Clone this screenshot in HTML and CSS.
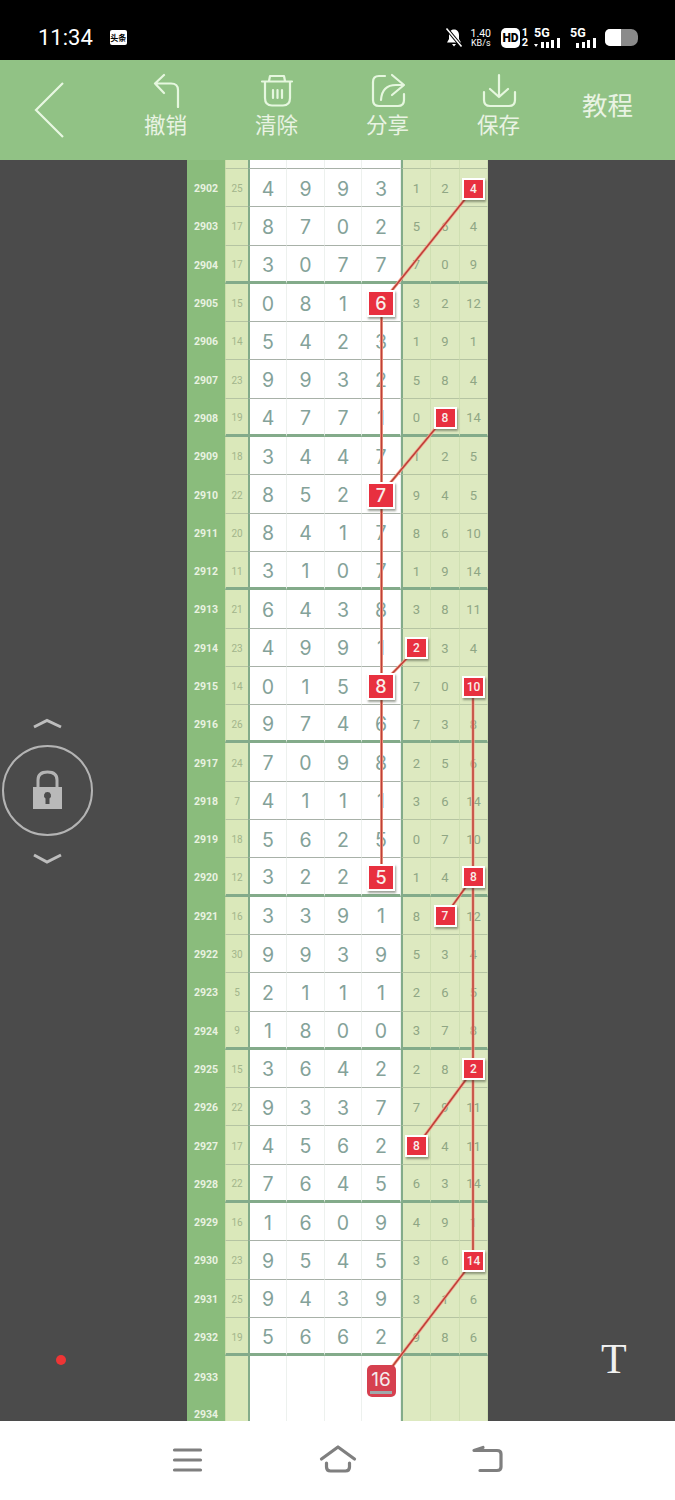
FILE: index.html
```html
<!DOCTYPE html>
<html lang="zh">
<head>
<meta charset="utf-8">
<title>走势图</title>
<link rel="stylesheet" href="styles.css">
</head>
<body>
<div class="page">
  <header class="status">
    <span class="time">11:34</span>
    <span class="app-badge">头条</span>
    <div class="status-right">
      <svg class="bell" viewBox="0 0 18 19"><path d="M9 1.5c3.4 0 5 2.6 5 5.5v4l2 3.5H2l2-3.5V7c0-2.900 1.600-5.500 5-5.500zM7 16h4l-2 2.500z" fill="#fff"/><path d="M1.500 0.500L16.500 18.500" stroke="#000" stroke-width="3.500"/><path d="M1.500 0.500L16.500 18.500" stroke="#fff" stroke-width="1.500"/></svg>
      <div class="speed"><span>1.40</span><span class="unit">KB/s</span></div>
      <span class="hd">HD</span>
      <div class="hd-nums"><span>1</span><span>2</span></div>
      <div class="sim">
        <span class="five">5G</span>
        <svg class="bars" viewBox="0 0 27 10"><path d="M0 6h4l-2 3zM7 4h3v6H7zM12 4h3v6h-3zM17 2h3v8h-3zM23 0h3v10h-3z" fill="#fff"/></svg>
      </div>
      <div class="sim sim-two">
        <span class="five">5G</span>
        <svg class="bars" viewBox="0 0 22 10"><path d="M1 5h3v5H1zM7 4h3v6H7zM12 2h3v8h-3zM18 0h3v10h-3z" fill="#fff"/></svg>
      </div>
      <div class="battery"><span class="battery-fill"></span></div>
    </div>
  </header>

  <nav class="toolbar">
    <div class="back-cell">
      <svg class="chevron" viewBox="33 80 32 60"><path d="M63 83L36 110L63 137"/></svg>
    </div>
    <div class="tool">
      <svg class="tool-icon" viewBox="145 72 40 36"><path d="M163 75L154 83.500L163 93M154 83.500H170Q177 83.500 177 90V107"/></svg>
      <span class="tool-label">撤销</span>
    </div>
    <div class="tool">
      <svg class="tool-icon" viewBox="256 72 40 36"><path d="M261 81.500H291M268 81L269 76H283L284 81M264 82V98Q264 105.500 271 105.500H282Q289 105.500 289 98V82M272 90V98M276.500 90V98M281 90V98"/></svg>
      <span class="tool-label">清除</span>
    </div>
    <div class="tool">
      <svg class="tool-icon" viewBox="367 72 40 36"><path d="M384 76H378Q372 76 372 82V100Q372 106 378 106H397Q403 106 403 100V94M391 75L403 85L391 95M403 85H395Q381 85 380 100"/></svg>
      <span class="tool-label">分享</span>
    </div>
    <div class="tool">
      <svg class="tool-icon" viewBox="478 72 40 36"><path d="M498 75V97M489 89L498 97L507 89M483 92V100Q483 106 489 106H508Q514 106 514 100V92"/></svg>
      <span class="tool-label">保存</span>
    </div>
    <div class="tutorial">教程</div>
  </nav>

  <main class="canvas">
    <div class="board">
      <div class="row lead"><span class="c i"></span><span class="c s"></span><span class="c d d1"></span><span class="c d"></span><span class="c d"></span><span class="c d"></span><span class="c r r1"></span><span class="c r"></span><span class="c r"></span></div>

      <div class="row"><span class="c i">2902</span><span class="c s">25</span><span class="c d d1">4</span><span class="c d">9</span><span class="c d">9</span><span class="c d">3</span><span class="c r r1">1</span><span class="c r">2</span><span class="c r"><b class="mark">4</b></span></div>
      <div class="row"><span class="c i">2903</span><span class="c s">17</span><span class="c d d1">8</span><span class="c d">7</span><span class="c d">0</span><span class="c d">2</span><span class="c r r1">5</span><span class="c r">6</span><span class="c r">4</span></div>
      <div class="row g"><span class="c i">2904</span><span class="c s">17</span><span class="c d d1">3</span><span class="c d">0</span><span class="c d">7</span><span class="c d">7</span><span class="c r r1">7</span><span class="c r">0</span><span class="c r">9</span></div>

      <div class="row"><span class="c i">2905</span><span class="c s">15</span><span class="c d d1">0</span><span class="c d">8</span><span class="c d">1</span><span class="c d"><b class="mark big">6</b></span><span class="c r r1">3</span><span class="c r">2</span><span class="c r">12</span></div>
      <div class="row"><span class="c i">2906</span><span class="c s">14</span><span class="c d d1">5</span><span class="c d">4</span><span class="c d">2</span><span class="c d">3</span><span class="c r r1">1</span><span class="c r">9</span><span class="c r">1</span></div>
      <div class="row"><span class="c i">2907</span><span class="c s">23</span><span class="c d d1">9</span><span class="c d">9</span><span class="c d">3</span><span class="c d">2</span><span class="c r r1">5</span><span class="c r">8</span><span class="c r">4</span></div>
      <div class="row g"><span class="c i">2908</span><span class="c s">19</span><span class="c d d1">4</span><span class="c d">7</span><span class="c d">7</span><span class="c d">1</span><span class="c r r1">0</span><span class="c r"><b class="mark">8</b></span><span class="c r">14</span></div>

      <div class="row"><span class="c i">2909</span><span class="c s">18</span><span class="c d d1">3</span><span class="c d">4</span><span class="c d">4</span><span class="c d">7</span><span class="c r r1">1</span><span class="c r">2</span><span class="c r">5</span></div>
      <div class="row"><span class="c i">2910</span><span class="c s">22</span><span class="c d d1">8</span><span class="c d">5</span><span class="c d">2</span><span class="c d"><b class="mark big">7</b></span><span class="c r r1">9</span><span class="c r">4</span><span class="c r">5</span></div>
      <div class="row"><span class="c i">2911</span><span class="c s">20</span><span class="c d d1">8</span><span class="c d">4</span><span class="c d">1</span><span class="c d">7</span><span class="c r r1">8</span><span class="c r">6</span><span class="c r">10</span></div>
      <div class="row g"><span class="c i">2912</span><span class="c s">11</span><span class="c d d1">3</span><span class="c d">1</span><span class="c d">0</span><span class="c d">7</span><span class="c r r1">1</span><span class="c r">9</span><span class="c r">14</span></div>

      <div class="row"><span class="c i">2913</span><span class="c s">21</span><span class="c d d1">6</span><span class="c d">4</span><span class="c d">3</span><span class="c d">8</span><span class="c r r1">3</span><span class="c r">8</span><span class="c r">11</span></div>
      <div class="row"><span class="c i">2914</span><span class="c s">23</span><span class="c d d1">4</span><span class="c d">9</span><span class="c d">9</span><span class="c d">1</span><span class="c r r1"><b class="mark">2</b></span><span class="c r">3</span><span class="c r">4</span></div>
      <div class="row"><span class="c i">2915</span><span class="c s">14</span><span class="c d d1">0</span><span class="c d">1</span><span class="c d">5</span><span class="c d"><b class="mark big">8</b></span><span class="c r r1">7</span><span class="c r">0</span><span class="c r"><b class="mark">10</b></span></div>
      <div class="row g"><span class="c i">2916</span><span class="c s">26</span><span class="c d d1">9</span><span class="c d">7</span><span class="c d">4</span><span class="c d">6</span><span class="c r r1">7</span><span class="c r">3</span><span class="c r">8</span></div>

      <div class="row"><span class="c i">2917</span><span class="c s">24</span><span class="c d d1">7</span><span class="c d">0</span><span class="c d">9</span><span class="c d">8</span><span class="c r r1">2</span><span class="c r">5</span><span class="c r">6</span></div>
      <div class="row"><span class="c i">2918</span><span class="c s">7</span><span class="c d d1">4</span><span class="c d">1</span><span class="c d">1</span><span class="c d">1</span><span class="c r r1">3</span><span class="c r">6</span><span class="c r">14</span></div>
      <div class="row"><span class="c i">2919</span><span class="c s">18</span><span class="c d d1">5</span><span class="c d">6</span><span class="c d">2</span><span class="c d">5</span><span class="c r r1">0</span><span class="c r">7</span><span class="c r">10</span></div>
      <div class="row g"><span class="c i">2920</span><span class="c s">12</span><span class="c d d1">3</span><span class="c d">2</span><span class="c d">2</span><span class="c d"><b class="mark big">5</b></span><span class="c r r1">1</span><span class="c r">4</span><span class="c r"><b class="mark">8</b></span></div>

      <div class="row"><span class="c i">2921</span><span class="c s">16</span><span class="c d d1">3</span><span class="c d">3</span><span class="c d">9</span><span class="c d">1</span><span class="c r r1">8</span><span class="c r"><b class="mark">7</b></span><span class="c r">12</span></div>
      <div class="row"><span class="c i">2922</span><span class="c s">30</span><span class="c d d1">9</span><span class="c d">9</span><span class="c d">3</span><span class="c d">9</span><span class="c r r1">5</span><span class="c r">3</span><span class="c r">4</span></div>
      <div class="row"><span class="c i">2923</span><span class="c s">5</span><span class="c d d1">2</span><span class="c d">1</span><span class="c d">1</span><span class="c d">1</span><span class="c r r1">2</span><span class="c r">6</span><span class="c r">5</span></div>
      <div class="row g"><span class="c i">2924</span><span class="c s">9</span><span class="c d d1">1</span><span class="c d">8</span><span class="c d">0</span><span class="c d">0</span><span class="c r r1">3</span><span class="c r">7</span><span class="c r">8</span></div>

      <div class="row"><span class="c i">2925</span><span class="c s">15</span><span class="c d d1">3</span><span class="c d">6</span><span class="c d">4</span><span class="c d">2</span><span class="c r r1">2</span><span class="c r">8</span><span class="c r"><b class="mark">2</b></span></div>
      <div class="row"><span class="c i">2926</span><span class="c s">22</span><span class="c d d1">9</span><span class="c d">3</span><span class="c d">3</span><span class="c d">7</span><span class="c r r1">7</span><span class="c r">9</span><span class="c r">11</span></div>
      <div class="row"><span class="c i">2927</span><span class="c s">17</span><span class="c d d1">4</span><span class="c d">5</span><span class="c d">6</span><span class="c d">2</span><span class="c r r1"><b class="mark">8</b></span><span class="c r">4</span><span class="c r">11</span></div>
      <div class="row g"><span class="c i">2928</span><span class="c s">22</span><span class="c d d1">7</span><span class="c d">6</span><span class="c d">4</span><span class="c d">5</span><span class="c r r1">6</span><span class="c r">3</span><span class="c r">14</span></div>

      <div class="row"><span class="c i">2929</span><span class="c s">16</span><span class="c d d1">1</span><span class="c d">6</span><span class="c d">0</span><span class="c d">9</span><span class="c r r1">4</span><span class="c r">9</span><span class="c r">1</span></div>
      <div class="row"><span class="c i">2930</span><span class="c s">23</span><span class="c d d1">9</span><span class="c d">5</span><span class="c d">4</span><span class="c d">5</span><span class="c r r1">3</span><span class="c r">6</span><span class="c r"><b class="mark">14</b></span></div>
      <div class="row"><span class="c i">2931</span><span class="c s">25</span><span class="c d d1">9</span><span class="c d">4</span><span class="c d">3</span><span class="c d">9</span><span class="c r r1">3</span><span class="c r">1</span><span class="c r">6</span></div>
      <div class="row g"><span class="c i">2932</span><span class="c s">19</span><span class="c d d1">5</span><span class="c d">6</span><span class="c d">6</span><span class="c d">2</span><span class="c r r1">9</span><span class="c r">8</span><span class="c r">6</span></div>

      <div class="row"><span class="c i">2933</span><span class="c s"></span><span class="c d d1"></span><span class="c d"></span><span class="c d"></span><span class="c d"><b class="current"><span class="current-num">16</span></b></span><span class="c r r1"></span><span class="c r"></span><span class="c r"></span></div>
      <div class="row"><span class="c i">2934</span><span class="c s"></span><span class="c d d1"></span><span class="c d"></span><span class="c d"></span><span class="c d"></span><span class="c r r1"></span><span class="c r"></span><span class="c r"></span></div>

      <svg class="trend" viewBox="0 0 301 1261">
        <g class="trend-glow">
          <path d="M287 28L194 144M194.500 144V717M258 257L194 334M230 488L194 525M286 525V1101M286 717L258 756M286 910L230 986M286 1101L195 1220"/>
        </g>
        <g class="trend-core">
          <path d="M287 28L194 144M194.500 144V717M258 257L194 334M230 488L194 525M286 525V1101M286 717L258 756M286 910L230 986M286 1101L195 1220"/>
        </g>
      </svg>
    </div>

    <svg class="lock" viewBox="0 700 100 170">
      <path class="lock-chev" d="M34 727L47 720.500L61 727M34 855L47 862L61 855"/>
      <circle class="lock-ring" cx="47.500" cy="790.500" r="44.500"/>
      <path class="lock-shackle" d="M38 787V780Q38 772 47.500 772Q57 772 57 780V787"/>
      <path class="lock-body" fill-rule="evenodd" d="M33 787H62V809H33zM47.500 792a3.500 3.500 0 0 0-2 6.400V804h4v-5.600a3.500 3.500 0 0 0-2-6.400z"/>
    </svg>
    <span class="dot"></span>
    <span class="type-t">T</span>
  </main>

  <footer class="navbar">
    <svg class="nav-icon" viewBox="167 1445 40 30"><path d="M174.500 1450H200.500M174.500 1460H200.500M174.500 1470H200.500"/></svg>
    <svg class="nav-icon" viewBox="317.500 1445 40 30"><path d="M321 1459L337.500 1447L354 1459M326 1463V1467Q326 1471 330 1471H345Q349 1471 349 1467V1463"/></svg>
    <svg class="nav-icon" viewBox="468 1445 40 30"><path d="M483 1447.500L474 1450.500H497Q501 1450.500 501 1454V1467Q501 1470.500 497 1470.500H480"/></svg>
  </footer>
</div>
</body>
</html>
```

FILE: styles.css
```css
* {
  box-sizing: border-box;
}

html,
body {
  margin: 0;
  padding: 0;
  background: #4b4b4b;
}

.page {
  display: flex;
  flex-direction: column;
  width: 675px;
  height: 1500px;
  overflow: hidden;
  font-family: Roboto, "Noto Sans CJK SC", sans-serif;
}

/* status bar */
.status {
  display: flex;
  align-items: center;
  flex: 0 0 60px;
  padding: 15px 37px 0 38px;
  background: #000;
  color: #fff;
}

.time {
  font-size: 22px;
}

.app-badge {
  width: 17px;
  height: 15px;
  margin-left: 17px;
  background: #fff;
  border-radius: 2px;
  color: #000;
  font: 700 8px/15px "Noto Sans CJK SC", sans-serif;
  text-align: center;
}

.status-right {
  display: flex;
  align-items: center;
  margin-left: auto;
}

.bell {
  width: 18px;
  height: 19px;
}

.speed {
  display: flex;
  flex-direction: column;
  margin-left: 8px;
  font-size: 10.500px;
  line-height: 11px;
  text-align: center;
}

.speed .unit {
  font-size: 9px;
  line-height: 9px;
}

.hd {
  width: 19px;
  height: 20px;
  margin-left: 10px;
  background: #fff;
  border-radius: 5px;
  color: #000;
  font-size: 12px;
  font-weight: 900;
  line-height: 20px;
  text-align: center;
}

.hd-nums {
  display: flex;
  flex-direction: column;
  width: 8px;
  margin-left: 1px;
  font-size: 11px;
  font-weight: 700;
  line-height: 10px;
  text-align: center;
}

.sim {
  display: flex;
  flex-direction: column;
  align-items: flex-start;
  width: 28px;
  margin-left: 5px;
}

.sim-two {
  width: 27px;
  margin-left: 8px;
}

.five {
  font-size: 12.500px;
  font-weight: 700;
  line-height: 10px;
}

.bars {
  width: 27px;
  height: 10px;
}

.sim-two .bars {
  width: 22px;
  margin-left: 5px;
}

.battery {
  width: 33px;
  height: 17px;
  margin-left: 8px;
  background: #8a8a8a;
  border-radius: 5px 7px 7px 5px;
  overflow: hidden;
}

.battery-fill {
  display: block;
  width: 16px;
  height: 17px;
  background: #fff;
}

/* toolbar */
.toolbar {
  display: grid;
  grid-template-columns: 110px repeat(4, 111px) 1fr;
  flex: 0 0 100px;
  background: #91c285;
  color: #e9f3e3;
}

.back-cell {
  padding: 20px 0 0 33px;
}

.chevron {
  display: block;
  width: 32px;
  height: 60px;
  fill: none;
  stroke: #e8f7e2;
  stroke-width: 2.2;
}

.tool {
  display: flex;
  flex-direction: column;
  align-items: center;
  padding-top: 12px;
}

.tool-icon {
  display: block;
  width: 40px;
  height: 36px;
  fill: none;
  stroke: #e6f7df;
  stroke-width: 2.2;
  stroke-linecap: round;
  stroke-linejoin: round;
}

.tool-label {
  margin-top: 3px;
  font: 400 21.500px/26px "Noto Sans CJK SC", sans-serif;
}

.tutorial {
  padding: 26px 0 0 28px;
  font: 400 25.500px/36px "Noto Sans CJK SC", sans-serif;
}

/* canvas with the table */
.canvas {
  position: relative;
  flex: 1 1 auto;
  min-height: 0;
  background: #4b4b4b;
}

.board {
  position: relative;
  width: 301px;
  height: 100%;
  margin-left: 187px;
  overflow: hidden;
}

.row {
  display: grid;
  grid-template-columns: 38px 23px 39px 38px 37px 39px 30px 29px 28px;
  height: 38.300px;
}

.row.lead {
  height: 9px;
}

.c {
  display: flex;
  align-items: center;
  justify-content: center;
  min-width: 0;
  padding-top: 2px;
  border-bottom: 1px solid #a8b1a8;
}

.row.g .c {
  padding-top: 3px;
  border-bottom: 3px solid #83ab8a;
}

.row.lead .c {
  padding-top: 0;
}

.row .i,
.row.g .i {
  padding-top: 1px;
  background: #8abc7c;
  border-bottom: 0;
  color: #e9f2e1;
  font-size: 10.500px;
  font-weight: 700;
}

.s {
  background: #dae8ba;
  border-left: 1px solid #cadcaa;
  color: #a2b58b;
  font-size: 10px;
}

.d {
  background: #fff;
  border-right: 1px solid #edf1ee;
  color: #84a299;
  font-family: Inter, Roboto, sans-serif;
  font-size: 19.500px;
}

.d1 {
  border-left: 2px solid #83ab8a;
}

.r {
  background: #dde9c0;
  border-right: 1px solid #cfdfb2;
  border-bottom-color: #b5c4a2;
  color: #8fa684;
  font-size: 13px;
}

.r1 {
  border-left: 2px solid #83ab8a;
}

.s {
  border-bottom-color: #b5c4a2;
}

.mark {
  position: relative;
  z-index: 2;
  display: flex;
  align-items: center;
  justify-content: center;
  flex: none;
  width: 23px;
  height: 22px;
  background: #e8303f;
  border: 2px solid #fff;
  box-shadow: 1px 2px 2px rgba(60, 70, 50, 0.5);
  color: #f8eeea;
  font-size: 12px;
  font-weight: 500;
}

.mark.big {
  width: 28px;
  height: 27px;
  font-family: Inter, Roboto, sans-serif;
  font-size: 18px;
  font-weight: 500;
}

.current {
  position: relative;
  z-index: 2;
  display: flex;
  align-items: flex-start;
  justify-content: center;
  flex: none;
  width: 29px;
  height: 32px;
  margin-top: 7px;
  background: #d6404f;
  border-radius: 5px;
  color: #f4ecec;
  font-size: 19px;
  font-weight: 400;
  line-height: 22px;
}

.current-num {
  margin-top: 4px;
  border-bottom: 3px solid #9fa9ab;
  padding: 0 1px;
}

.trend {
  position: absolute;
  top: 0;
  left: 0;
  z-index: 1;
  width: 301px;
  height: 1261px;
  fill: none;
}

.trend-glow {
  stroke: #f3a58f;
  stroke-width: 3;
}

.trend-core {
  stroke: #bd4038;
  stroke-width: 1.500;
}

/* left lock and overlays */
.lock {
  position: absolute;
  top: 540px;
  left: 0;
  width: 100px;
  height: 170px;
}

.lock-chev {
  fill: none;
  stroke: #bdbdbd;
  stroke-width: 3;
}

.lock-ring {
  fill: none;
  stroke: #b4b4b4;
  stroke-width: 2;
}

.lock-shackle {
  fill: none;
  stroke: #b4b4b4;
  stroke-width: 3;
}

.lock-body {
  fill: #b9b9b9;
}

.dot {
  position: absolute;
  top: 1195px;
  left: 56px;
  width: 10px;
  height: 10px;
  background: #ee3535;
  border-radius: 50%;
}

.type-t {
  position: absolute;
  top: 1173px;
  left: 601px;
  color: #f1f1f1;
  font: 400 42px/52px "Liberation Serif", serif;
}

/* bottom nav */
.navbar {
  display: flex;
  align-items: flex-start;
  justify-content: center;
  gap: 110.500px;
  flex: 0 0 79px;
  padding-top: 24px;
  background: #fff;
}

.nav-icon {
  width: 40px;
  height: 30px;
  fill: none;
  stroke: #7f7f7f;
  stroke-width: 3.200;
  stroke-linecap: round;
  stroke-linejoin: round;
}
```
